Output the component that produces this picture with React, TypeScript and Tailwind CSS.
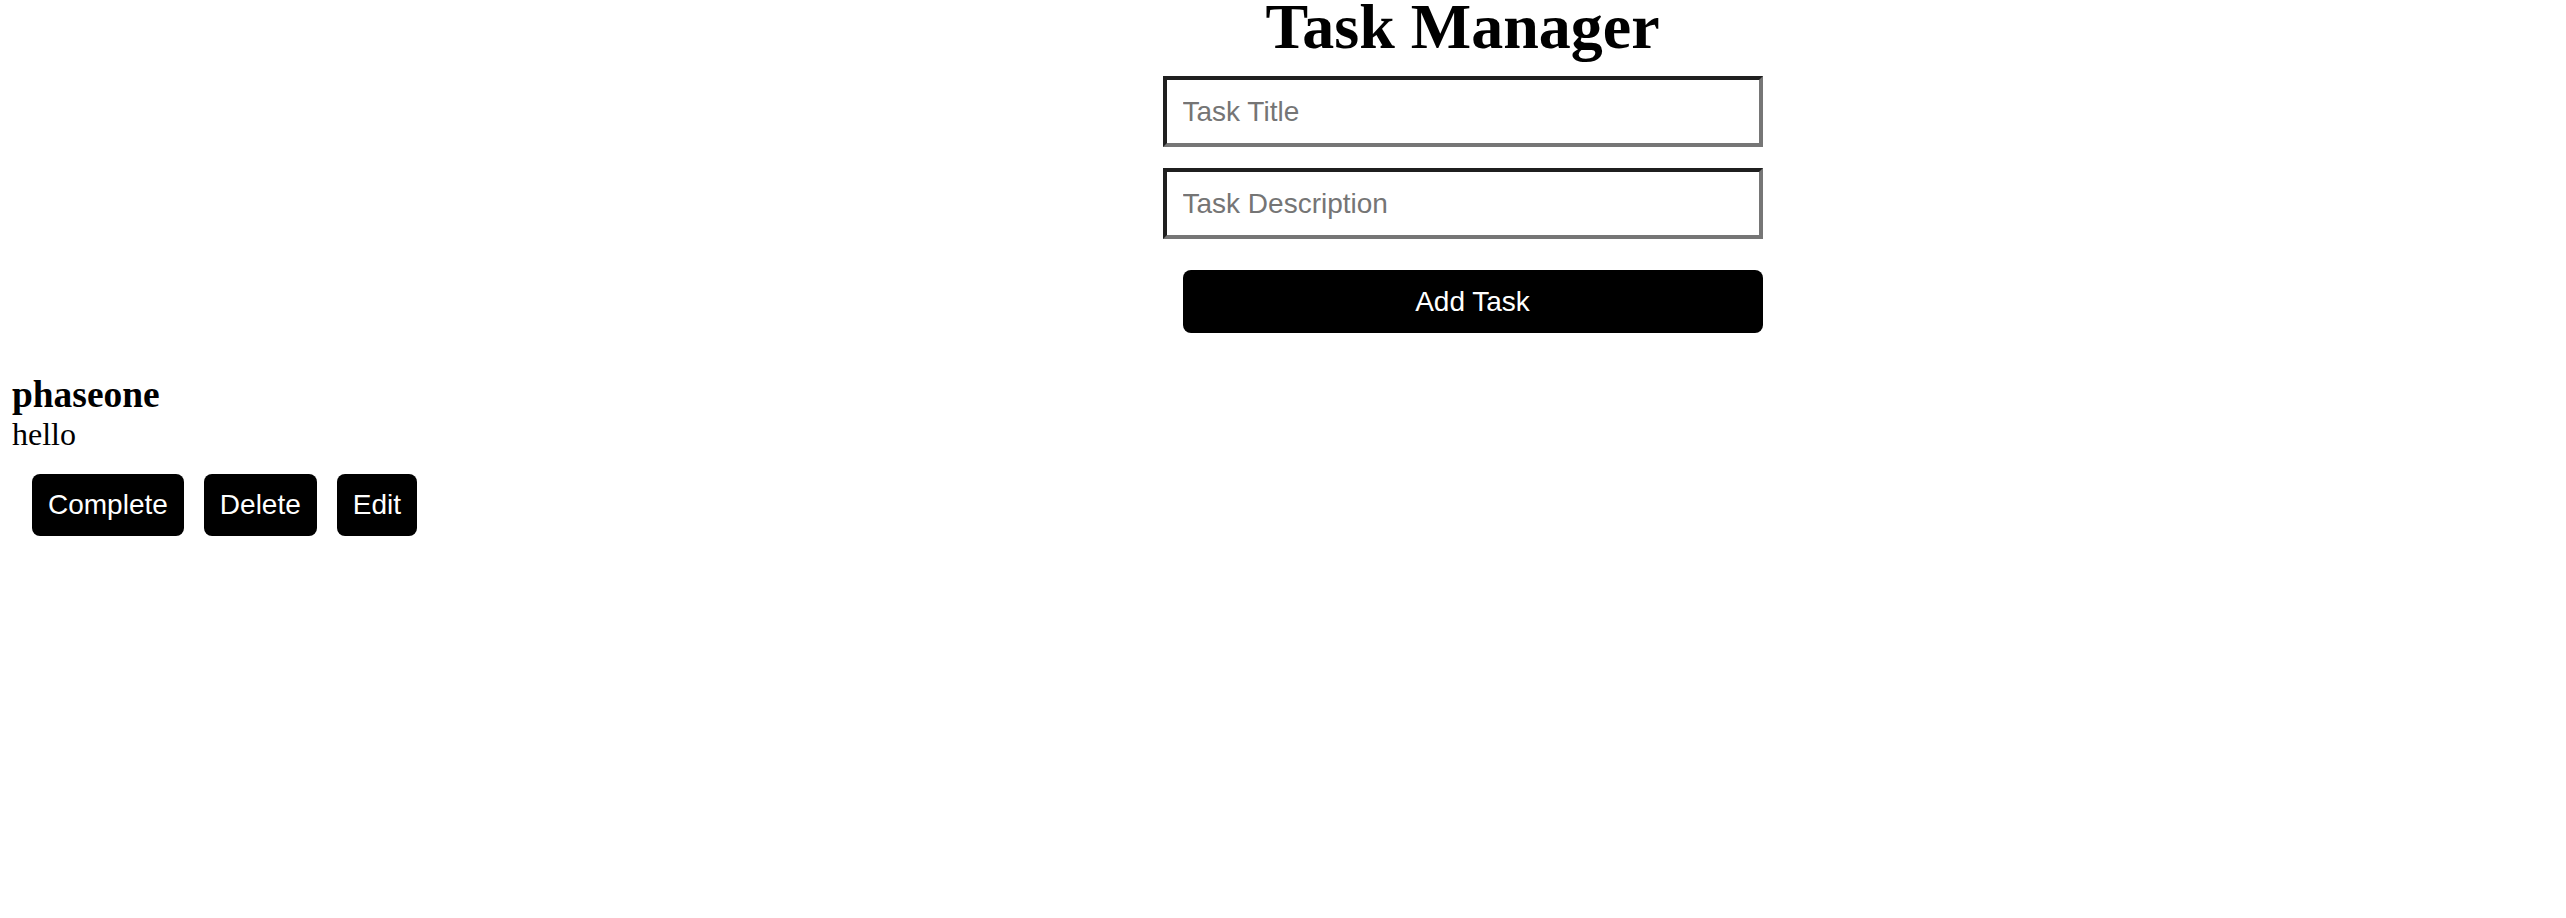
import React, { useState } from "react";

type Task = {
    id: number;
    title: string;
    description: string;
    completed: boolean;
};

const inputClass =
    "w-[600px] border-4 border-t-[#1f1f1f] border-l-[#1f1f1f] border-r-[#767676] border-b-[#767676] bg-white px-4 py-4 font-['Liberation_Sans',Arial,sans-serif] text-[28px] leading-[31px] text-black placeholder:text-[#757575] outline-none";

const taskButtonClass =
    "rounded-lg bg-black px-4 py-4 font-['Liberation_Sans',Arial,sans-serif] text-[28px] leading-[30px] text-white";

const App = () => {
    const [title, setTitle] = useState("");
    const [description, setDescription] = useState("");
    const [tasks, setTasks] = useState<Task[]>([
        { id: 1, title: "phaseone", description: "hello", completed: false },
    ]);

    const handleAdd = () => {
        if (!title.trim()) return;
        setTasks([...tasks, { id: Date.now(), title, description, completed: false }]);
        setTitle("");
        setDescription("");
    };

    const handleComplete = (id: number) => {
        setTasks(tasks.map((t) => (t.id === id ? { ...t, completed: !t.completed } : t)));
    };

    const handleDelete = (id: number) => {
        setTasks(tasks.filter((t) => t.id !== id));
    };

    return (
        <div className="min-h-[918px] bg-white font-['Liberation_Serif','Times_New_Roman',serif] text-black">
            <div className="flex justify-center pl-[359px]">
                <div className="flex w-[600px] flex-col">
                    <h1 className="text-center text-[64px] font-bold leading-[53px]">Task Manager</h1>
                    <input
                        className={`mt-[23px] ${inputClass}`}
                        placeholder="Task Title"
                        value={title}
                        onChange={(e) => setTitle(e.target.value)}
                    />
                    <input
                        className={`mt-[21px] ${inputClass}`}
                        placeholder="Task Description"
                        value={description}
                        onChange={(e) => setDescription(e.target.value)}
                    />
                    <button
                        onClick={handleAdd}
                        className="mt-[31px] ml-5 w-[580px] rounded-lg bg-black py-4 font-['Liberation_Sans',Arial,sans-serif] text-[28px] leading-[31px] text-white"
                    >
                        Add Task
                    </button>
                </div>
            </div>

            <div className="mt-10 pl-3">
                {tasks.map((task) => (
                    <div key={task.id}>
                        <h3 className={`text-[37.44px] font-bold leading-[normal] ${task.completed ? "line-through" : ""}`}>
                            {task.title}
                        </h3>
                        <p className="text-[32px] leading-[normal]">{task.description}</p>
                        <div className="mt-[21px] flex gap-5 pl-5">
                            <button className={taskButtonClass} onClick={() => handleComplete(task.id)}>
                                Complete
                            </button>
                            <button className={taskButtonClass} onClick={() => handleDelete(task.id)}>
                                Delete
                            </button>
                            <button className={taskButtonClass}>Edit</button>
                        </div>
                    </div>
                ))}
            </div>
        </div>
    );
};

export default App;
